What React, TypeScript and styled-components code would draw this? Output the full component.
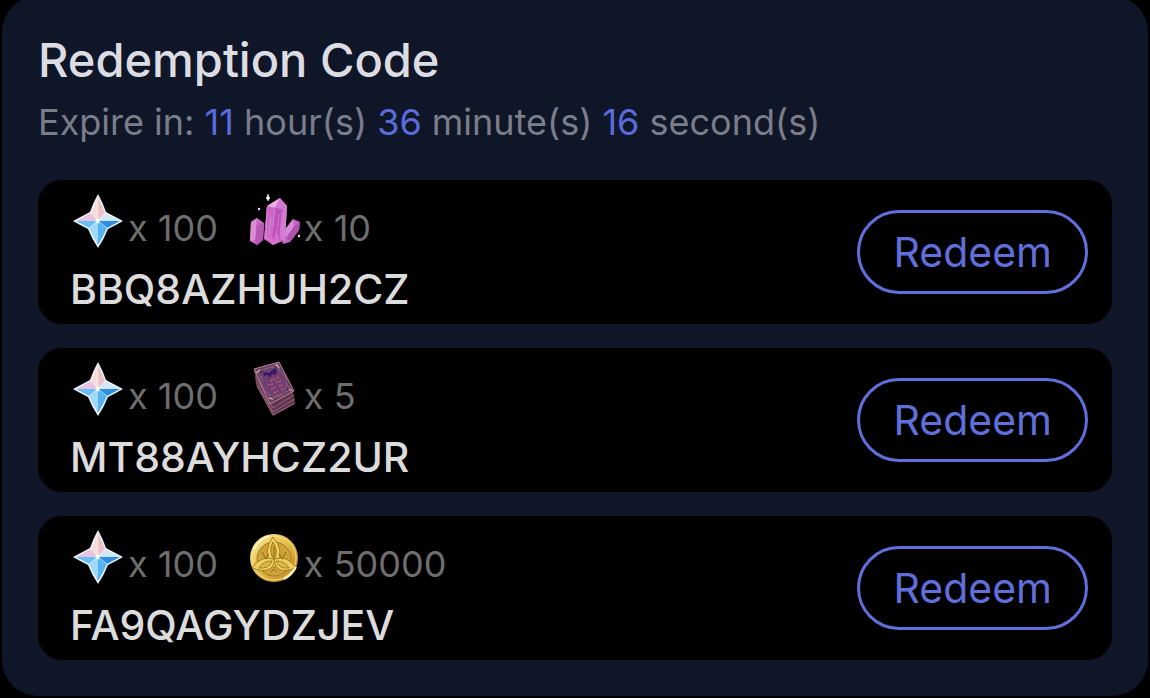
import React from "react";
import styled, { createGlobalStyle } from "styled-components";

const GlobalStyle = createGlobalStyle`
  * { box-sizing: border-box; }
  html { background: #000; }
  body {
    margin: 0;
    background: #000;
    font-family: Inter, "Liberation Sans", sans-serif;
    overflow-x: hidden;
  }
  h1, p, ul { margin: 0; padding: 0; }
`;

const Panel = styled.main`
  margin: -4px 2px 0;
  padding: 36px;
  border-radius: 36px;
  background: #0f1628;
`;

const Title = styled.h1`
  color: #dcdde3;
  font-size: 47px;
  font-weight: 500;
  line-height: 56px;
`;

const Expiry = styled.p`
  margin-top: 12px;
  color: #7b7d88;
  font-size: 36px;
  line-height: 44px;
`;

const Figure = styled.span`
  color: #5a6cdc;
`;

const CodeList = styled.ul`
  display: flex;
  flex-direction: column;
  gap: 24px;
  margin-top: 36px;
  list-style: none;
`;

const CodeCard = styled.li`
  display: flex;
  align-items: center;
  justify-content: space-between;
  height: 144px;
  padding: 0 24px 0 32px;
  border-radius: 24px;
  background: #000;
`;

const Details = styled.div`
  display: flex;
  flex-direction: column;
  gap: 16px;
  padding-top: 2px;
`;

const Rewards = styled.div`
  display: flex;
  gap: 28px;
`;

const Reward = styled.span`
  display: flex;
  align-items: center;
  gap: 2px;
  height: 56px;
`;

const Amount = styled.span`
  padding-top: 14px;
  color: #6e6e6e;
  font-size: 36px;
  line-height: 40px;
`;

const Code = styled.strong`
  color: #dcdcdc;
  font-size: 41px;
  font-weight: 500;
  line-height: 48px;
`;

const RedeemButton = styled.button`
  height: 84px;
  padding: 0 33px;
  border: 3px solid #5f6fdc;
  border-radius: 42px;
  background: transparent;
  color: #5f6fdc;
  font: 400 41px/48px Inter, "Liberation Sans", sans-serif;
`;

const Icon = styled.svg`
  display: block;
  flex: none;
  width: 56px;
  height: 56px;
`;

const Primogem = () => (
  <Icon viewBox="0 0 56 56" aria-hidden="true">
    <path d="M28 1Q33 10 36 19L53 28Q46 32 38 36Q34 46 28 55Q22 46 18 36Q10 32 3 28L20 19Q23 10 28 1Z" fill="#eef7ff" />
    <path d="M28 4Q24 12 21 20L28 28Z" fill="#f8ddd6" />
    <path d="M28 4Q32 12 35 20L28 28Z" fill="#ecc0c6" />
    <path d="M21 20L6 28H28Z" fill="#e8c3df" />
    <path d="M35 20L50 28H28Z" fill="#d3e6f8" />
    <path d="M6 28L19 35L28 28Z" fill="#68bdf6" />
    <path d="M19 35Q23 44 28 52V28Z" fill="#9fd9fa" />
    <path d="M50 28L37 35L28 28Z" fill="#2a8ee3" />
    <path d="M37 35Q33 44 28 52V28Z" fill="#57b3ee" />
    <path d="M28 8V28L21 20M28 28L35 20M28 28L19 35M28 28L37 35" fill="none" stroke="#fff" strokeWidth="1" opacity=".4" />
    <path d="M28 24L30 28L28 31L25 28Z" fill="#fff" opacity=".8" />
  </Icon>
);

const Crystals = () => (
  <Icon viewBox="0 0 56 56" aria-hidden="true">
    <path d="M47 26L54 29L53 37L44 49L37 51L35 42Z" fill="#c465c2" />
    <path d="M47 26L48 33L40 44L35 42Z" fill="#d98ad5" />
    <path d="M48 33L54 29L53 37L44 49L40 44Z" fill="#b152b0" />
    <path d="M11 25L18 30L17 47L11 52L4 48L5 29Z" fill="#c869c4" />
    <path d="M11 25L10 33L9 47L4 48L5 29Z" fill="#db90d6" />
    <path d="M10 33L18 30L17 47L11 52L9 47Z" fill="#b856b6" />
    <path d="M34 5L41 13L39 48L34 49L27 52L18 46L21 13Z" fill="#c75fc5" />
    <path d="M34 5L29 15L21 13Z" fill="#ebaee6" />
    <path d="M34 5L41 13L37 17L29 15Z" fill="#d078cf" />
    <path d="M21 13L29 15L26 49L18 46Z" fill="#cb68c5" />
    <path d="M29 15L37 17L34 46L26 49Z" fill="#bd50bb" />
    <path d="M37 17L41 13L39 48L34 46Z" fill="#d27dd0" />
    <path d="M21 14L20 45M29 16L27 34M33 21L31 39M25 24L23 42M36 18L34 42M10 34L9 46M47 34L40 44" fill="none" stroke="#f2c0ef" strokeWidth="1" opacity=".35" />
    <path d="M24 50L25 42L28 47L30 37L33 44L34 49L27 52ZM19 46L22 42L24 49" fill="#dc78d4" opacity=".75" />
    <path d="M22 1L23 4L24 5L23 6L22 8L21 6L20 5L21 4Z" fill="#fff" stroke="#fff" strokeWidth=".5" />
    <circle cx="13" cy="16" r="1.2" fill="#ffd5fc" />
    <circle cx="53" cy="43" r="1.2" fill="#ffd5fc" />
  </Icon>
);

const Book = () => (
  <Icon viewBox="0 0 56 56" aria-hidden="true">
    <path d="M8 8L10 24L27 55L49 43L47 29L22 38Z" fill="#62344f" />
    <path d="M10 16L27 47L48 34M10 20L27 51L49 38M11 25L27 54L49 42" fill="none" stroke="#97647f" strokeWidth="1" />
    <path d="M8 8L33 1L48 30L24 43Z" fill="#65405f" stroke="#b58694" strokeWidth="1" />
    <path d="M12 10L31 4L44 29L25 38Z" fill="#573353" stroke="#926480" strokeWidth="1" />
    <ellipse cx="28" cy="21" rx="12" ry="15" transform="rotate(-27 28 21)" fill="#6d3f72" stroke="#85547d" />
    <path d="M17 11L23 12L29 7L31 8L30 14L26 13L24 17L22 14L18 15Z" fill="#381866" />
    <path d="M24 20L29 18M31 17L33 16M22 24L27 23M30 21L35 20M25 28L30 26M33 25L37 24M28 32L32 30M35 29L39 27M31 35L35 33" stroke="#cf566f" strokeWidth="1.5" strokeDasharray="2 1" />
    <path d="M10 12L14 9M30 3L33 7M43 28L46 30M23 37L27 38" stroke="#d0a7a5" strokeWidth="1.5" />
  </Icon>
);

const Mora = () => (
  <Icon viewBox="0 0 56 56" aria-hidden="true">
    <defs>
      <linearGradient id="gold" x1="0" y1="0" x2="1" y2="1">
        <stop offset="0" stopColor="#fff1aa" />
        <stop offset=".45" stopColor="#e6c04f" />
        <stop offset=".8" stopColor="#c99730" />
        <stop offset="1" stopColor="#fff4c0" />
      </linearGradient>
    </defs>
    <circle cx="28" cy="29" r="24" fill="url(#gold)" />
    <circle cx="28" cy="29" r="22" fill="none" stroke="#f7dc7b" strokeWidth="1" />
    <circle cx="28" cy="30" r="17" fill="#cfa338" stroke="#a07d20" strokeWidth="1" />
    <g fill="#ecce62" stroke="#a47d1c" strokeWidth="1">
      <path d="M27 8Q17 21 24 34L28 39L32 34Q38 20 27 8Z" />
      <path d="M6 39Q14 26 29 30Q27 47 6 39Z" />
      <path d="M50 39Q42 26 28 30Q29 47 50 39Z" />
      <path d="M27 13Q22 22 28 31Q33 22 27 13Z" fill="#d2a73a" />
      <path d="M13 39Q17 32 26 32Q23 40 13 39Z" fill="#dfb94c" />
      <path d="M43 39Q39 32 30 32Q33 40 43 39Z" fill="#dfb94c" />
    </g>
    <path d="M16 23L20 30L23 25M40 23L36 30L33 25M25 43L28 40L31 43M28 17V28" fill="none" stroke="#8b6812" strokeWidth="1" />
    <path d="M8 20Q13 10 23 7M38 50Q46 46 50 38" fill="none" stroke="#fff5bd" strokeWidth="2" />
  </Icon>
);

const codes = [
  { code: "BBQ8AZHUH2CZ", Bonus: Crystals, amount: 10 },
  { code: "MT88AYHCZ2UR", Bonus: Book, amount: 5 },
  { code: "FA9QAGYDZJEV", Bonus: Mora, amount: 50000 },
];

export default function App() {
  return (
    <>
      <GlobalStyle />
      <Panel>
        <Title>Redemption Code</Title>
        <Expiry>
          Expire in: <Figure>11</Figure> hour(s) <Figure>36</Figure> minute(s) <Figure>16</Figure> second(s)
        </Expiry>
        <CodeList>
          {codes.map(({ code, Bonus, amount }) => (
            <CodeCard key={code}>
              <Details>
                <Rewards>
                  <Reward>
                    <Primogem />
                    <Amount>x 100</Amount>
                  </Reward>
                  <Reward>
                    <Bonus />
                    <Amount>x {amount}</Amount>
                  </Reward>
                </Rewards>
                <Code>{code}</Code>
              </Details>
              <RedeemButton type="button">Redeem</RedeemButton>
            </CodeCard>
          ))}
        </CodeList>
      </Panel>
    </>
  );
}
